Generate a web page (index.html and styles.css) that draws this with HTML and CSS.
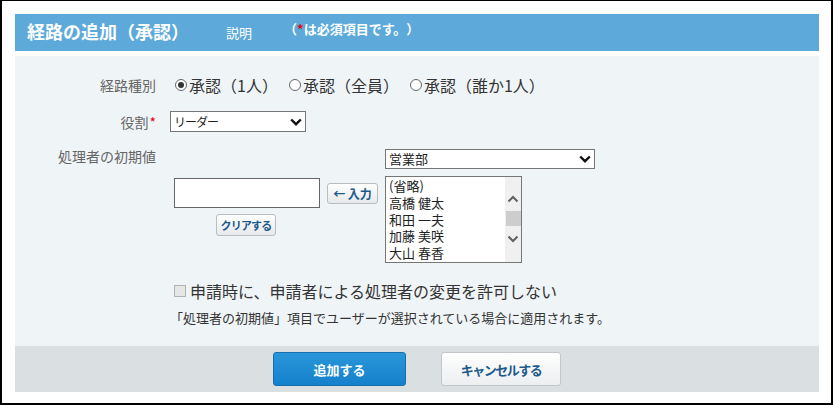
FILE: index.html
```html
<!DOCTYPE html>
<html lang="ja">
<head>
<meta charset="utf-8">
<title>経路の追加（承認）</title>
<link rel="stylesheet" href="styles.css">
</head>
<body>
<div class="frame">
  <div class="header">
    <h1 class="title">経路の追加（承認）</h1>
    <span class="help">説明</span>
    <span class="reqnote">（<span class="req">*</span>は必須項目です。）</span>
  </div>
  <div class="content">
    <div class="row row-type">
      <div class="label">経路種別</div>
      <div class="value radios">
        <label class="radio"><input type="radio" name="t" checked><span>承認（1人）</span></label>
        <label class="radio"><input type="radio" name="t"><span>承認（全員）</span></label>
        <label class="radio"><input type="radio" name="t"><span>承認（誰か1人）</span></label>
      </div>
    </div>
    <div class="row row-role">
      <div class="label">役割<span class="req">*</span></div>
      <div class="value">
        <div class="select select-role">
          <span class="select-text kana">リーダー</span>
          <svg class="chev" width="12" height="8" viewBox="0 0 12 8"><path d="M1.2 1.5 L6 6.2 L10.8 1.5" fill="none" stroke="#111" stroke-width="2.4"/></svg>
        </div>
      </div>
    </div>
    <div class="row row-init">
      <div class="label label-top">処理者の初期値</div>
      <div class="value picker">
        <div class="pick-left">
          <input class="textbox" type="text">
          <button class="btn-small btn-clear">クリアする</button>
        </div>
        <button class="btn-small btn-input">← 入力</button>
        <div class="pick-right">
          <div class="select select-dept">
            <span class="select-text">営業部</span>
            <svg class="chev" width="12" height="8" viewBox="0 0 12 8"><path d="M1.2 1.5 L6 6.2 L10.8 1.5" fill="none" stroke="#111" stroke-width="2.4"/></svg>
          </div>
          <div class="listbox">
            <ul class="items">
              <li>(省略)</li>
              <li>高橋 健太</li>
              <li>和田 一夫</li>
              <li>加藤 美咲</li>
              <li>大山 春香</li>
            </ul>
            <div class="scrollbar">
              <svg class="sb-up" width="12" height="8" viewBox="0 0 12 8"><path d="M1.5 6.5 L6 2 L10.5 6.5" fill="none" stroke="#606060" stroke-width="2"/></svg>
              <div class="thumb"></div>
              <svg class="sb-down" width="12" height="8" viewBox="0 0 12 8"><path d="M1.5 1.5 L6 6 L10.5 1.5" fill="none" stroke="#606060" stroke-width="2"/></svg>
            </div>
          </div>
        </div>
      </div>
    </div>
    <label class="checkrow"><input type="checkbox" disabled><span>申請時に、申請者による処理者の変更を許可しない</span></label>
    <p class="note">「処理者の初期値」項目でユーザーが選択されている場合に適用されます。</p>
  </div>
  <div class="footer">
    <button class="btn-primary">追加する</button>
    <button class="btn-cancel">キャンセルする</button>
  </div>
</div>
</body>
</html>
```

FILE: styles.css
```css
* { box-sizing: border-box; text-spacing-trim: space-all; }
html, body { margin: 0; padding: 0; background: #fff; }
body {
  font-family: "Noto Sans CJK JP", "Noto Sans", sans-serif;
  color: #333;
}
.frame {
  width: 833px;
  height: 405px;
  border: 2px solid #000;
  border-top-width: 1px;
  padding: 13px 12px 11px 13px;
  background: #fff;
  display: flex;
  flex-direction: column;
}
.header {
  height: 37px;
  flex: none;
  background: #5daada;
  display: flex;
  align-items: center;
  padding-left: 12px;
  color: #fff;
}
.title {
  margin: 0;
  font-size: 18px;
  font-weight: bold;
  line-height: 20px;
  margin-top: -3px;
}
.help {
  margin-left: 37px;
  font-size: 13px;
  line-height: 16px;
  margin-top: 1px;
}
.reqnote {
  margin-left: 32px;
  font-size: 13px;
  font-weight: bold;
  line-height: 16px;
  margin-top: -8px;
}
.req { color: #e60012; font-weight: normal; }
.reqnote .req { color: #e60012; font-weight: bold; }

.content {
  margin-top: 5px;
  height: 290px;
  flex: none;
  background: #eff4f7;
  padding-top: 17px;
}
.row {
  display: grid;
  grid-template-columns: 141px 1fr;
  column-gap: 14px;
  align-items: center;
}
.label {
  text-align: right;
  font-size: 14px;
  line-height: 18px;
  color: #666;
}
.label .req { margin-left: 1px; }
.row-type { height: 24px; }
.radios { display: flex; align-items: center; }
.radio {
  display: flex;
  align-items: center;
  margin-left: 5px;
  margin-right: 6px;
  font-size: 16px;
  line-height: 22px;
  color: #333;
}
.radio + .radio { margin-left: 5px; }
.radio input {
  appearance: none;
  -webkit-appearance: none;
  width: 12px;
  height: 12px;
  margin: 0 2px 0 0;
  border: 1px solid #666;
  border-radius: 50%;
  background: #fff;
  display: grid;
  place-items: center;
}
.radio input:checked::after {
  content: "";
  width: 6px;
  height: 6px;
  border-radius: 50%;
  background: #333;
}

.row-role { margin-top: 14px; height: 21px; }
.select {
  position: relative;
  background: #fff;
  border: 1px solid #767676;
  display: flex;
  align-items: center;
  padding-left: 3px;
  font-size: 13px;
  color: #222;
}
.select-role { width: 136px; height: 21px; }
.select-dept { width: 210px; height: 20px; }
.select-text { line-height: 16px; }
.kana { font-size: 12px; letter-spacing: -1px; }
.chev { position: absolute; right: 3px; top: 50%; margin-top: -4px; }

.row-init { margin-top: 17px; align-items: start; }
.label-top { line-height: 14px; }
.picker { display: flex; align-items: flex-start; }
.pick-left {
  display: flex;
  flex-direction: column;
  align-items: center;
  margin-left: 4px;
  padding-top: 29px;
}
.textbox {
  width: 146px;
  height: 30px;
  margin: 0;
  border: 1px solid #666;
  background: #fff;
  padding: 0 3px;
}
.btn-small {
  font-family: inherit;
  font-size: 12px;
  font-weight: bold;
  color: #1d5a8c;
  background: linear-gradient(#ffffff, #e6e8ea);
  border: 1px solid #b9bdc0;
  border-radius: 3px;
  padding: 0;
  line-height: 14px;
  white-space: nowrap;
}
.btn-clear { width: 60px; height: 22px; margin-top: 6px; margin-left: -2px; font-size: 11px; letter-spacing: -0.8px; }
.btn-input { width: 51px; height: 21px; margin-left: 7px; margin-top: 34px; }
.pick-right { margin-left: 7px; display: flex; flex-direction: column; }
.listbox {
  margin-top: 7px;
  width: 137px;
  height: 87px;
  border: 1px solid #767676;
  background: #fff;
  display: flex;
}
.items {
  list-style: none;
  margin: 0;
  padding: 1px 0 0 3px;
  flex: 1;
  font-size: 13px;
  line-height: 16.8px;
  color: #222;
  overflow: hidden;
}
.items li { white-space: nowrap; }
.scrollbar {
  width: 16px;
  background: #f0f0f0;
  display: flex;
  flex-direction: column;
  align-items: center;
}
.sb-up { margin-top: 18px; }
.thumb { width: 15px; height: 15px; background: #cdcdcd; margin-top: 8px; }
.sb-down { margin-top: 9px; }

.checkrow {
  display: flex;
  align-items: center;
  margin-top: 18px;
  padding-left: 155px;
  height: 20px;
  font-size: 16px;
  line-height: 20px;
  color: #333;
}
.checkrow input {
  appearance: none;
  -webkit-appearance: none;
  width: 12px;
  height: 12px;
  margin: 0 4px 0 4px;
  background: #e6e6e6;
  border: 1px solid #b3b3b3;
}
.note {
  margin: 8px 0 0 0;
  padding-left: 155px;
  font-size: 13px;
  line-height: 18px;
  color: #333;
}

.footer {
  height: 46px;
  flex: none;
  background: #dadfe2;
  display: flex;
  justify-content: center;
  align-items: flex-start;
  gap: 35px;
  padding-top: 6px;
}
.btn-primary, .btn-cancel {
  font-family: inherit;
  font-size: 13px;
  font-weight: bold;
  height: 34px;
  border-radius: 3px;
  padding: 0;
}
.btn-primary {
  width: 133px;
  color: #fff;
  background: linear-gradient(#2996da, #1581cc);
  border: 1px solid #176fae;
}
.btn-cancel {
  width: 120px;
  color: #1d5a8c;
  background: linear-gradient(#ffffff, #eceeef);
  border: 1px solid #c2c7cb;
  letter-spacing: -1.5px;
}
```
